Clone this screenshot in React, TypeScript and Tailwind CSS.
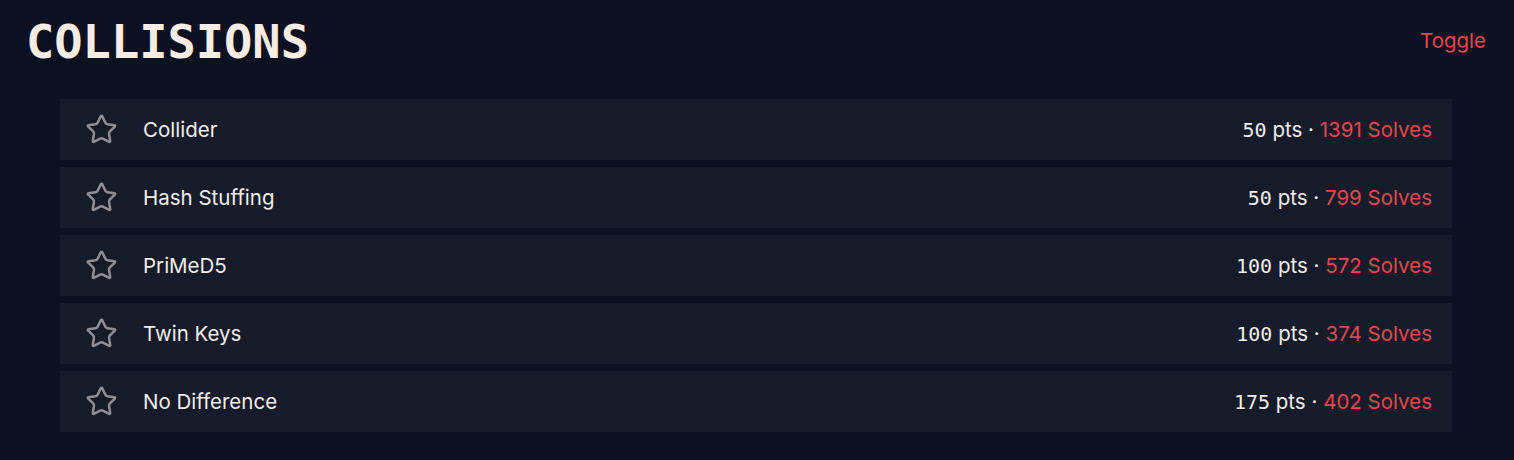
import { Star } from "lucide-react";

type Challenge = {
  name: string;
  points: number;
  solves: number;
};

const CHALLENGES: Challenge[] = [
  { name: "Collider", points: 50, solves: 1391 },
  { name: "Hash Stuffing", points: 50, solves: 799 },
  { name: "PriMeD5", points: 100, solves: 572 },
  { name: "Twin Keys", points: 100, solves: 374 },
  { name: "No Difference", points: 175, solves: 402 },
];

export default function App() {
  return (
    <main className="min-h-[460px] w-full bg-[#0b1120] px-7 pt-[14px] font-['Inter',sans-serif]">
      <header className="flex items-start justify-between">
        <h1 className="-ml-[2px] font-['DejaVu_Sans_Mono',monospace] text-[47px] font-bold leading-[56px] text-[#f9ece4]">
          COLLISIONS
        </h1>
        <button type="button" className="mt-[12px] text-[20.5px] text-[#e5484d]">
          Toggle
        </button>
      </header>

      <ul className="ml-8 mr-[34px] mt-[29px] flex flex-col gap-[7px]">
        {CHALLENGES.map((challenge) => (
          <li
            key={challenge.name}
            className="flex h-[61px] items-center justify-between bg-[#161b2a] pl-[25px] pr-5 pt-[2px]"
          >
            <div className="flex items-center gap-[25px]">
              <Star size={33} strokeWidth={1.8} className="-mt-[2px] text-[#8f8f93]" />
              <span className="text-[20.5px] text-[#f3eee9]">{challenge.name}</span>
            </div>
            <div className="text-[20.5px]">
              <span className="font-['DejaVu_Sans_Mono',monospace] text-[20px] text-[#f3eee9]">
                {challenge.points}
              </span>
              <span className="text-[#f3eee9]"> pts · </span>
              <span className="text-[#e5484d]">{challenge.solves} Solves</span>
            </div>
          </li>
        ))}
      </ul>
    </main>
  );
}
